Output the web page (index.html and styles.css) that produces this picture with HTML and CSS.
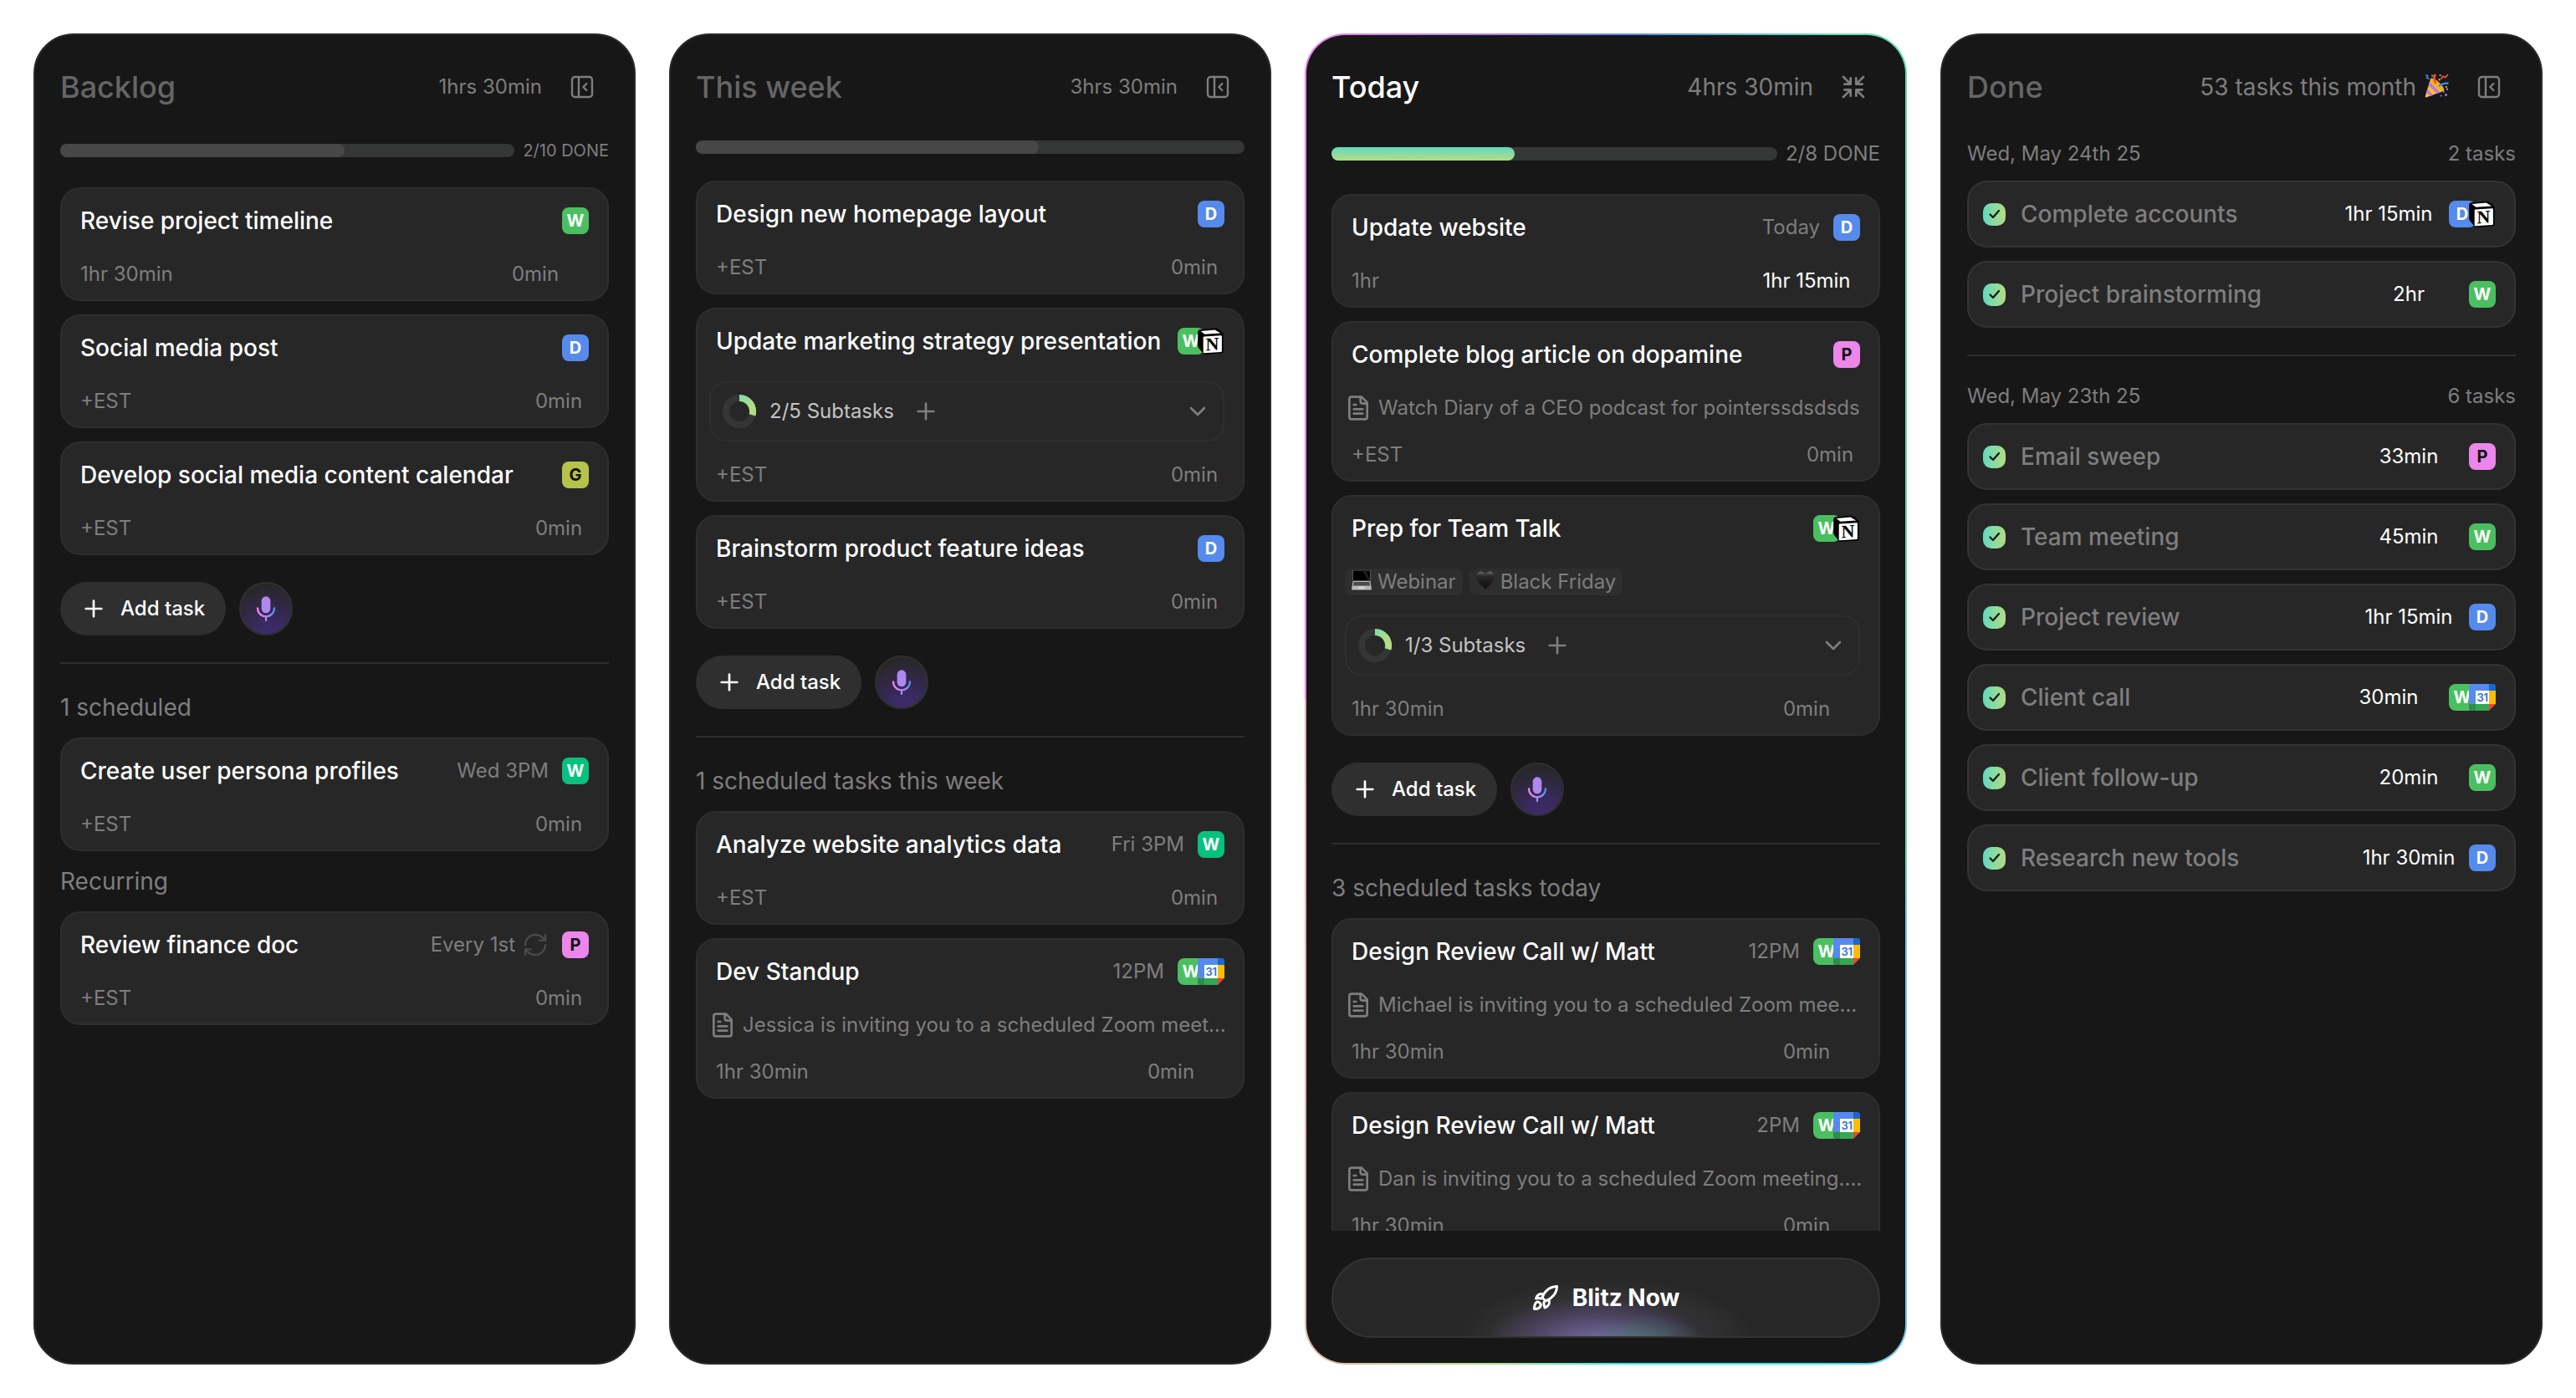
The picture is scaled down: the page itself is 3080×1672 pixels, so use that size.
FILE: index.html
```html
<!DOCTYPE html>
<html lang="en">
<head>
<meta charset="utf-8">
<title>Tasks</title>
<link rel="stylesheet" href="styles.css">
</head>
<body>

<!-- icons -->
<svg class="sprite" xmlns="http://www.w3.org/2000/svg">
  <defs>
    <linearGradient id="micgrad" x1="5" y1="0" x2="19" y2="0" gradientUnits="userSpaceOnUse">
      <stop offset="0" stop-color="#f283e8"/>
      <stop offset=".35" stop-color="#b388f0"/>
      <stop offset=".7" stop-color="#a586f0"/>
      <stop offset="1" stop-color="#4f93ee"/>
    </linearGradient>
    <linearGradient id="ringgrad" x1="20" y1="0" x2="40" y2="20" gradientUnits="userSpaceOnUse">
      <stop offset="0" stop-color="#7fdcae"/>
      <stop offset=".6" stop-color="#a9dd8c"/>
      <stop offset="1" stop-color="#b4dc82"/>
    </linearGradient>
    <linearGradient id="heartgrad" x1="0" y1="0" x2="0" y2="1">
      <stop offset="0" stop-color="#6a6a6a"/>
      <stop offset=".25" stop-color="#2a2a2a"/>
      <stop offset="1" stop-color="#0c0c0c"/>
    </linearGradient>
  </defs>
  <symbol id="i-panel" viewBox="0 0 24 24">
    <g fill="none" stroke="currentColor" stroke-width="1.8" stroke-linecap="round" stroke-linejoin="round">
      <rect x="3" y="3" width="18" height="18" rx="2.5"/>
      <path d="M9 3v18M16 9l-3 3 3 3"/>
    </g>
  </symbol>
  <symbol id="i-shrink" viewBox="0 0 24 24">
    <path d="M3 3l6.500 6.500M9.500 4v5.500H4M21 3l-6.500 6.500M14.500 4v5.500H20M3 21l6.500-6.500M9.500 20v-5.500H4M21 21l-6.500-6.500M14.500 20v-5.500H20" fill="none" stroke="currentColor" stroke-width="2" stroke-linecap="round" stroke-linejoin="round"/>
  </symbol>
  <symbol id="i-plus" viewBox="0 0 24 24">
    <path d="M5 12h14M12 5v14" fill="none" stroke="currentColor" stroke-width="2" stroke-linecap="round"/>
  </symbol>
  <symbol id="i-down" viewBox="0 0 24 24">
    <path d="M6 9l6 6 6-6" fill="none" stroke="currentColor" stroke-width="2" stroke-linecap="round" stroke-linejoin="round"/>
  </symbol>
  <symbol id="i-mic" viewBox="0 0 24 24">
    <rect x="8" y="1" width="8" height="15" rx="4" fill="#b087f0"/>
    <path d="M4.500 11.500a7.500 7.500 0 0 0 15 0" fill="none" stroke="url(#micgrad)" stroke-width="1.700" stroke-linecap="round"/>
    <path d="M12 19.200v3.300" fill="none" stroke="#b087f0" stroke-width="1.700" stroke-linecap="round"/>
  </symbol>
  <symbol id="i-note" viewBox="0 0 24 24">
    <path d="M15 2H6a2 2 0 0 0-2 2v16a2 2 0 0 0 2 2h12a2 2 0 0 0 2-2V7zM14 2v4a2 2 0 0 0 2 2h4M10 9H8M16 13H8M16 17H8" fill="none" stroke="currentColor" stroke-width="2" stroke-linecap="round" stroke-linejoin="round"/>
  </symbol>
  <symbol id="i-repeat" viewBox="0 0 24 24">
    <path d="M3 12a9 9 0 0 1 9-9 9.750 9.750 0 0 1 6.740 2.740L21 8M21 3v5h-5M21 12a9 9 0 0 1-9 9 9.750 9.750 0 0 1-6.740-2.740L3 16M8 16H3v5" fill="none" stroke="currentColor" stroke-width="1.800" stroke-linecap="round" stroke-linejoin="round"/>
  </symbol>
  <symbol id="i-ring" viewBox="0 0 40 40">
    <circle cx="20" cy="20" r="16" fill="none" stroke="#333635" stroke-width="8"/>
    <path d="M20 4A16 16 0 0 1 35.500 24.300" fill="none" stroke="url(#ringgrad)" stroke-width="8"/>
  </symbol>
  <symbol id="i-check" viewBox="0 0 14 14">
    <path d="M1.500 7.500l3.500 3.500L12 3" fill="none" stroke="#171717" stroke-width="2.200" stroke-linecap="round" stroke-linejoin="round"/>
  </symbol>
  <symbol id="i-rocket" viewBox="0 0 32 32">
    <g fill="none" stroke="#fff" stroke-width="3" stroke-linecap="round" stroke-linejoin="round">
      <path d="M12 16C14 9 20 3 29.500 2.500 29.500 11 23 17.500 16 20z"/>
      <path d="M13 12c-3.500-1.500-7 0-8.500 5 2-.6 4-.6 6 0M20 19c1.500 4-1 7.500-5 9-.500-2-1.500-4-1-6.500"/>
      <path d="M4.500 22c2.500-2.500 7.500 1 5 5-1.500 2-5 2.500-7 2.500 0-2.500.5-6 2-7.500z"/>
    </g>
  </symbol>
  <symbol id="i-notion" viewBox="0 0 32 32">
    <path d="M3.500 2.200L20.500.7c2-.2 2.700 0 4 .9l4.600 3.800c1 .7 1.500 1.200 1.500 2.200v20.600c0 1.400-.7 2.200-2.300 2.400L9.300 31.700c-1.300.1-2-.1-2.700-1L1.200 24.200C.5 23.200.2 22.500.2 21.600V5C.2 3.700 1 2.400 3.500 2.200z" fill="#000"/>
    <path d="M3.600 4l16.900-1.600 6.800 4-19 1.400z" fill="#fff"/>
    <path d="M6.700 11.500c0-.7.300-1 .9-1l20.200-1.300c.7 0 1.100.3 1.100 1v17.600c0 .8-.3 1.100-1 1.200L7.900 30.300c-.8 0-1.200-.3-1.200-1z" fill="#fff"/>
  </symbol>
  <symbol id="i-gcal" viewBox="0 0 32 32">
    <path d="M3 0h21v8H8v16H0V3a3 3 0 0 1 3-3z" fill="#568aec"/>
    <path d="M24 0h5a3 3 0 0 1 3 3v5h-8z" fill="#1967d2"/>
    <path d="M24 8h8v16h-8z" fill="#fbbc04"/>
    <path d="M8 24h16v8H8z" fill="#34a853"/>
    <path d="M0 24h8v8H3a3 3 0 0 1-3-3z" fill="#2b8f47"/>
    <path d="M24 24h8l-8 8z" fill="#ea4335"/>
    <path d="M8 8h16v16H8z" fill="#fff"/>
  </symbol>
  <symbol id="i-laptop" viewBox="0 0 24 24">
    <path d="M1 0h22v13H1z" fill="#555"/>
    <path d="M2 .6h20v11.600H2z" fill="#000"/>
    <path d="M13 .6h4l5 10v1.600h-2z" fill="#1c1c1c"/>
    <path d="M1.500 13h21l1.500 10.500H0z" fill="#b5b5b5"/>
    <path d="M2.500 14h19l.6 4.500H1.900z" fill="#4a4a4a"/>
    <path d="M8.500 19.500h7l.5 3H8z" fill="#d4d4d4"/>
  </symbol>
  <symbol id="i-heart" viewBox="1 0 22 24">
    <path d="M12 22.500C6 17.500 1.500 12.500 1.500 7.300 1.500 3.600 4 1.500 6.700 1.500c2.400 0 4.300 1.400 5.300 3.600 1-2.200 2.900-3.600 5.300-3.600 2.700 0 5.200 2.100 5.200 5.800 0 5.200-4.500 10.200-10.500 15.200z" fill="url(#heartgrad)"/>
  </symbol>
  <symbol id="i-party" viewBox="0 0 28 28">
    <path d="M7 6l15 14L2.500 27.300C1 27.800.4 27 .8 25.800z" fill="#fbc02d"/>
    <path d="M5.600 9.500l12.500 12.200-4 1.500L4.400 13.500zM3 17.800l7 7-3.500 1.300-4.600-4.500z" fill="#b77be0"/>
    <ellipse cx="14.500" cy="13" rx="10.500" ry="3.600" transform="rotate(43 14.500 13)" fill="#f6b21b"/>
    <path d="M13 11.500C10.500 7 10.500 4 12.500.8" fill="none" stroke="#e8552f" stroke-width="2.600"/>
    <path d="M16.500 14.500c3-3 6-3.500 11-3.500" fill="none" stroke="#3f86e8" stroke-width="2.400"/>
    <path d="M1 1.500l2.500 1-1 2.500 3 1" fill="none" stroke="#3f86e8" stroke-width="1.600"/>
    <path d="M19 6.500l2-3.500 3 1.500 3-3.500" fill="none" stroke="#e8552f" stroke-width="1.700"/>
    <path d="M8 1.500h2v2H8zM17 1h2v2h-2zM25 17h2v2h-2z" fill="#b77be0"/>
    <path d="M21 20h2v2h-2zM18 24.500h2v2h-2z" fill="#3f86e8"/>
    <path d="M16 6h2v2h-2zM24 14.500h2v1.600h-2z" fill="#fbc02d"/>
    <path d="M23.500 23.500h2.300v2.300h-2.300z" fill="#e27ad6"/>
  </symbol>
</svg>

<div class="board">

  <!-- backlog -->
  <div class="column">
    <div class="head">
      <h2>Backlog</h2>
      <span class="total">1hrs 30min</span>
      <button class="iconbtn"><svg><use href="#i-panel"/></svg></button>
    </div>
    <div class="progress">
      <div class="bar"><div class="fill" style="width: 62.5%"></div></div>
      <span class="count">2/10 DONE</span>
    </div>
    <div class="list">
      <div class="card">
        <div class="top"><h3>Revise project timeline</h3><span class="badge green">W</span></div>
        <div class="times"><span>1hr 30min</span><span class="spent wide">0min</span></div>
      </div>
      <div class="card">
        <div class="top"><h3>Social media post</h3><span class="badge blue">D</span></div>
        <div class="times"><span>+EST</span><span class="spent">0min</span></div>
      </div>
      <div class="card">
        <div class="top"><h3>Develop social media content calendar</h3><span class="badge olive">G</span></div>
        <div class="times"><span>+EST</span><span class="spent">0min</span></div>
      </div>
    </div>
    <div class="actions">
      <button class="add"><svg><use href="#i-plus"/></svg>Add task</button>
      <button class="mic"><svg><use href="#i-mic"/></svg></button>
    </div>
    <hr>
    <div class="list">
      <h4>1 scheduled</h4>
      <div class="card">
        <div class="top"><h3>Create user persona profiles</h3><span class="when">Wed 3PM</span><span class="badge teal">W</span></div>
        <div class="times"><span>+EST</span><span class="spent">0min</span></div>
      </div>
      <h4>Recurring</h4>
      <div class="card">
        <div class="top"><h3>Review finance doc</h3><span class="when">Every 1st<svg><use href="#i-repeat"/></svg></span><span class="badge pink">P</span></div>
        <div class="times"><span>+EST</span><span class="spent">0min</span></div>
      </div>
    </div>
  </div>

  <!-- this week -->
  <div class="column">
    <div class="head">
      <h2>This week</h2>
      <span class="total">3hrs 30min</span>
      <button class="iconbtn"><svg><use href="#i-panel"/></svg></button>
    </div>
    <div class="progress">
      <div class="bar"><div class="fill" style="width: 62.5%"></div></div>
    </div>
    <div class="list">
      <div class="card">
        <div class="top"><h3>Design new homepage layout</h3><span class="badge blue">D</span></div>
        <div class="times"><span>+EST</span><span class="spent">0min</span></div>
      </div>
      <div class="card">
        <div class="top"><h3>Update marketing strategy presentation</h3><span class="badge green">W</span><span class="app notion"><svg><use href="#i-notion"/></svg><b>N</b></span></div>
        <div class="subtasks">
          <svg class="ring"><use href="#i-ring"/></svg><span>2/5 Subtasks</span><svg class="plus"><use href="#i-plus"/></svg><svg class="down"><use href="#i-down"/></svg>
        </div>
        <div class="times"><span>+EST</span><span class="spent">0min</span></div>
      </div>
      <div class="card">
        <div class="top"><h3>Brainstorm product feature ideas</h3><span class="badge blue">D</span></div>
        <div class="times"><span>+EST</span><span class="spent">0min</span></div>
      </div>
    </div>
    <div class="actions">
      <button class="add"><svg><use href="#i-plus"/></svg>Add task</button>
      <button class="mic"><svg><use href="#i-mic"/></svg></button>
    </div>
    <hr>
    <div class="list">
      <h4>1 scheduled tasks this week</h4>
      <div class="card">
        <div class="top"><h3>Analyze website analytics data</h3><span class="when">Fri 3PM</span><span class="badge teal">W</span></div>
        <div class="times"><span>+EST</span><span class="spent">0min</span></div>
      </div>
      <div class="card">
        <div class="top"><h3>Dev Standup</h3><span class="when">12PM</span><span class="badge green">W</span><span class="app gcal"><svg><use href="#i-gcal"/></svg><b>31</b></span></div>
        <div class="note"><svg><use href="#i-note"/></svg>Jessica is inviting you to a scheduled Zoom meet…</div>
        <div class="times"><span>1hr 30min</span><span class="spent wide">0min</span></div>
      </div>
    </div>
  </div>

  <!-- today -->
  <div class="column today">
    <div class="scroll">
      <div class="head">
        <h2>Today</h2>
        <span class="total">4hrs 30min</span>
        <button class="iconbtn"><svg><use href="#i-shrink"/></svg></button>
      </div>
      <div class="progress">
        <div class="bar"><div class="fill" style="width: 41%"></div></div>
        <span class="count">2/8 DONE</span>
      </div>
      <div class="list">
        <div class="card">
          <div class="top"><h3>Update website</h3><span class="when">Today</span><span class="badge blue">D</span></div>
          <div class="times"><span>1hr</span><span class="spent wide active">1hr 15min</span></div>
        </div>
        <div class="card">
          <div class="top"><h3>Complete blog article on dopamine</h3><span class="badge pink">P</span></div>
          <div class="note"><svg><use href="#i-note"/></svg>Watch Diary of a CEO podcast for pointerssdsdsds</div>
          <div class="times"><span>+EST</span><span class="spent">0min</span></div>
        </div>
        <div class="card">
          <div class="top"><h3>Prep for Team Talk</h3><span class="badge green">W</span><span class="app notion"><svg><use href="#i-notion"/></svg><b>N</b></span></div>
          <div class="tags">
            <span class="tag"><svg><use href="#i-laptop"/></svg>Webinar</span>
            <span class="tag"><svg class="heart"><use href="#i-heart"/></svg>Black Friday</span>
          </div>
          <div class="subtasks">
            <svg class="ring"><use href="#i-ring"/></svg><span>1/3 Subtasks</span><svg class="plus"><use href="#i-plus"/></svg><svg class="down"><use href="#i-down"/></svg>
          </div>
          <div class="times"><span>1hr 30min</span><span class="spent wide">0min</span></div>
        </div>
      </div>
      <div class="actions">
        <button class="add"><svg><use href="#i-plus"/></svg>Add task</button>
        <button class="mic"><svg><use href="#i-mic"/></svg></button>
      </div>
      <hr>
      <div class="list">
        <h4>3 scheduled tasks today</h4>
        <div class="card">
          <div class="top"><h3>Design Review Call w/ Matt</h3><span class="when">12PM</span><span class="badge green">W</span><span class="app gcal"><svg><use href="#i-gcal"/></svg><b>31</b></span></div>
          <div class="note"><svg><use href="#i-note"/></svg>Michael is inviting you to a scheduled Zoom mee…</div>
          <div class="times"><span>1hr 30min</span><span class="spent wide">0min</span></div>
        </div>
        <div class="card">
          <div class="top"><h3>Design Review Call w/ Matt</h3><span class="when">2PM</span><span class="badge green">W</span><span class="app gcal"><svg><use href="#i-gcal"/></svg><b>31</b></span></div>
          <div class="note"><svg><use href="#i-note"/></svg>Dan is inviting you to a scheduled Zoom meeting.…</div>
          <div class="times"><span>1hr 30min</span><span class="spent wide">0min</span></div>
        </div>
      </div>
    </div>
    <button class="blitz"><svg><use href="#i-rocket"/></svg>Blitz Now</button>
  </div>

  <!-- done -->
  <div class="column done">
    <div class="head">
      <h2>Done</h2>
      <span class="total">53 tasks this month<svg class="party"><use href="#i-party"/></svg></span>
      <button class="iconbtn"><svg><use href="#i-panel"/></svg></button>
    </div>
    <div class="list">
      <div class="day"><span>Wed, May 24th 25</span><span>2 tasks</span></div>
      <div class="item"><i class="check"><svg><use href="#i-check"/></svg></i><span class="name">Complete accounts</span><span class="took">1hr 15min</span><span class="badge blue">D</span><span class="app notion"><svg><use href="#i-notion"/></svg><b>N</b></span></div>
      <div class="item"><i class="check"><svg><use href="#i-check"/></svg></i><span class="name">Project brainstorming</span><span class="took">2hr</span><span class="badge green">W</span></div>
    </div>
    <hr>
    <div class="list">
      <div class="day"><span>Wed, May 23th 25</span><span>6 tasks</span></div>
      <div class="item"><i class="check"><svg><use href="#i-check"/></svg></i><span class="name">Email sweep</span><span class="took">33min</span><span class="badge pink">P</span></div>
      <div class="item"><i class="check"><svg><use href="#i-check"/></svg></i><span class="name">Team meeting</span><span class="took">45min</span><span class="badge green">W</span></div>
      <div class="item"><i class="check"><svg><use href="#i-check"/></svg></i><span class="name">Project review</span><span class="took">1hr 15min</span><span class="badge blue">D</span></div>
      <div class="item"><i class="check"><svg><use href="#i-check"/></svg></i><span class="name">Client call</span><span class="took">30min</span><span class="badge green">W</span><span class="app gcal"><svg><use href="#i-gcal"/></svg><b>31</b></span></div>
      <div class="item"><i class="check"><svg><use href="#i-check"/></svg></i><span class="name">Client follow-up</span><span class="took">20min</span><span class="badge green">W</span></div>
      <div class="item"><i class="check"><svg><use href="#i-check"/></svg></i><span class="name">Research new tools</span><span class="took">1hr 30min</span><span class="badge blue">D</span></div>
    </div>
  </div>

</div>

</body>
</html>
```
FILE: styles.css
```css
* {
  box-sizing: border-box;
}
body {
  margin: 0;
  background: #fff;
  font-family: Inter, "Liberation Sans", sans-serif;
  font-size: 24px;
  line-height: 32px;
  color: #7e7e7e;
}
h2, h3, h4 {
  margin: 0;
  font-weight: 400;
}
button {
  border: 0;
  padding: 0;
  background: none;
  font: inherit;
  color: inherit;
  cursor: pointer;
}
svg {
  display: block;
  width: 32px;
  height: 32px;
  flex: none;
}
.sprite {
  position: absolute;
  width: 0;
  height: 0;
}
hr {
  flex: none;
  width: 100%;
  height: 2px;
  margin: 0;
  border: 0;
  background: #2e2e2e;
}

.board {
  display: flex;
  gap: 40px;
  height: 1672px;
  padding: 40px;
}
.column {
  display: flex;
  flex-direction: column;
  gap: 32px;
  width: 720px;
  padding: 30px;
  border: 2px solid #2a2a2a;
  border-radius: 48px;
  background: #171717;
  overflow: hidden;
}

.head {
  display: flex;
  align-items: center;
  height: 64px;
  white-space: nowrap;
}
.head h2 {
  flex: 1;
  font-size: 36px;
  line-height: 44px;
  font-weight: 500;
  color: #656565;
}
.total {
  display: flex;
  align-items: center;
  margin-right: 16px;
}
.iconbtn {
  padding: 16px;
  color: #7e7e7e;
}

.progress {
  display: flex;
  align-items: center;
  gap: 10px;
}
.bar {
  flex: 1;
  height: 16px;
  border-radius: 8px;
  background: #353736;
}
.fill {
  height: 16px;
  border-radius: 8px;
  background: #474747;
}
.count {
  font-size: 20px;
  line-height: 24px;
}

.list {
  display: flex;
  flex-direction: column;
  gap: 16px;
}
h4 {
  font-size: 28px;
  line-height: 40px;
}
.card {
  display: flex;
  flex-direction: column;
  gap: 24px;
  padding: 22px 22px 14px;
  border: 2px solid #2e2e2e;
  border-radius: 24px;
  background: #272727;
  white-space: nowrap;
}
.top {
  display: flex;
  align-items: center;
  margin-bottom: 8px;
}
.card h3 {
  flex: 1;
  font-size: 28px;
  line-height: 32px;
  font-weight: 500;
  color: #fff;
}
.when {
  display: flex;
  gap: 8px;
  margin-right: 16px;
}
.when svg {
  color: #4a4a4a;
}
.times {
  display: flex;
  justify-content: space-between;
}
.spent {
  width: 72px;
  text-align: center;
}
.wide {
  width: 128px;
}
.active {
  color: #fff;
}

.badge {
  flex: none;
  width: 32px;
  height: 32px;
  border-radius: 8px;
  font-size: 20px;
  font-weight: 700;
  text-align: center;
  color: #fff;
}
.green { background: #4bbf60; }
.teal { background: #07c17e; }
.blue { background: #568aec; }
.olive { background: #b5c34b; color: #111; }
.pink { background: #ec86ea; color: #111; }

/* app logo sits over the list badge */
.app {
  position: relative;
  flex: none;
  width: 32px;
  height: 32px;
  margin-left: -8px;
}
.app b {
  position: absolute;
  top: 8px;
  left: 8px;
  width: 16px;
  text-align: center;
  line-height: 16px;
}
.gcal b {
  font-size: 13px;
  font-weight: 600;
  letter-spacing: -.3px;
  color: #2a6fdc;
}
.notion b {
  top: 10px;
  left: 7px;
  width: 21px;
  line-height: 20px;
  font-family: "Liberation Serif", serif;
  font-size: 22px;
  color: #000;
  transform: skewY(-4deg);
}

.note {
  display: flex;
  gap: 8px;
  margin-left: -8px;
}
.tags {
  display: flex;
  gap: 8px;
  margin-left: -8px;
}
.tag {
  display: flex;
  align-items: center;
  gap: 7px;
  padding: 0 8px;
  border-radius: 8px;
  background: #2e2e2e;
}
.tag svg {
  width: 24px;
  height: 24px;
  margin-top: -4px;
}
.tag .heart {
  width: 22px;
}
.subtasks {
  display: flex;
  align-items: center;
  height: 72px;
  margin-left: -8px;
  padding: 0 14px;
  border: 2px solid #2e2e2e;
  border-radius: 20px;
  color: #c4c4c4;
}
.ring {
  width: 40px;
  height: 40px;
  margin-right: 16px;
}
.plus {
  margin-left: 22px;
  color: #7e7e7e;
}
.down {
  margin-left: auto;
  color: #7e7e7e;
}

.actions {
  display: flex;
  gap: 16px;
}
.add {
  display: flex;
  align-items: center;
  gap: 16px;
  width: 198px;
  height: 64px;
  padding: 0 0 0 24px;
  border-radius: 32px;
  background: #2f2f2f;
  font-weight: 500;
  color: #fff;
}
.mic {
  display: flex;
  align-items: center;
  justify-content: center;
  width: 64px;
  height: 64px;
  border: 2px solid #303030;
  border-radius: 50%;
  background: radial-gradient(circle at 60% 110%, #402b72 0, #392a60 30%, #272727 85%);
}

/* active column, rainbow outline */
.today {
  border-color: transparent;
  background:
    linear-gradient(#171717, #171717) padding-box,
    conic-gradient(from 270deg, #ee82ea 0deg, #ee82ea 66deg, #a97fe8 82deg, #5a8cf0 92deg, #62dcb8 108deg, #62dcb8 205deg, #7cc5ea 222deg, #7cc5ea 246deg, #22eeee 252deg, #22eeee 268deg, #a8dc8c 279deg, #e0b8a8 294deg, #e0b0b0 360deg) border-box;
}
.scroll {
  display: flex;
  flex-direction: column;
  gap: 32px;
  flex: 1;
  min-height: 0;
  overflow: hidden;
}
.scroll > * {
  flex: none;
}
.today h2 {
  color: #fff;
}
.today .total {
  font-size: 28px;
}
.today .count {
  font-size: 24px;
  line-height: 32px;
}
.today .fill {
  background: linear-gradient(#5fdac0, #b4dc82);
}
.blitz {
  display: flex;
  flex: none;
  align-items: center;
  justify-content: center;
  gap: 16px;
  height: 96px;
  border: 2px solid #343434;
  border-radius: 48px;
  background:
    radial-gradient(ellipse 70px 30px at 57% 105%, rgba(70, 150, 120, .45), transparent),
    radial-gradient(ellipse 130px 50px at 48% 105%, rgba(120, 110, 165, .9), rgba(95, 85, 125, .5) 60%, transparent),
    radial-gradient(ellipse 180px 75px at 50% 105%, rgba(70, 55, 100, .8), rgba(60, 60, 60, .4) 75%, transparent),
    #272727;
  font-size: 28px;
  font-weight: 700;
  color: #fff;
}

.done .total {
  font-size: 28px;
}
.party {
  width: 29px;
  height: 29px;
  margin-left: 10px;
  margin-top: -4px;
}
.day {
  display: flex;
  justify-content: space-between;
}
.item {
  display: flex;
  align-items: center;
  height: 80px;
  padding: 0 22px 0 14px;
  border: 2px solid #333;
  border-radius: 24px;
  background: #272727;
  white-space: nowrap;
}
.check {
  display: flex;
  align-items: center;
  justify-content: center;
  width: 27px;
  height: 27px;
  margin: 0 18px 0 3px;
  border-radius: 10px;
  background: linear-gradient(to right, #5fdac0, #b4dc82);
}
.check svg {
  width: 14px;
  height: 14px;
}
.name {
  flex: 1;
  font-size: 28px;
  font-weight: 500;
}
.took {
  width: 128px;
  margin-right: 8px;
  text-align: center;
  color: #fff;
}
```
